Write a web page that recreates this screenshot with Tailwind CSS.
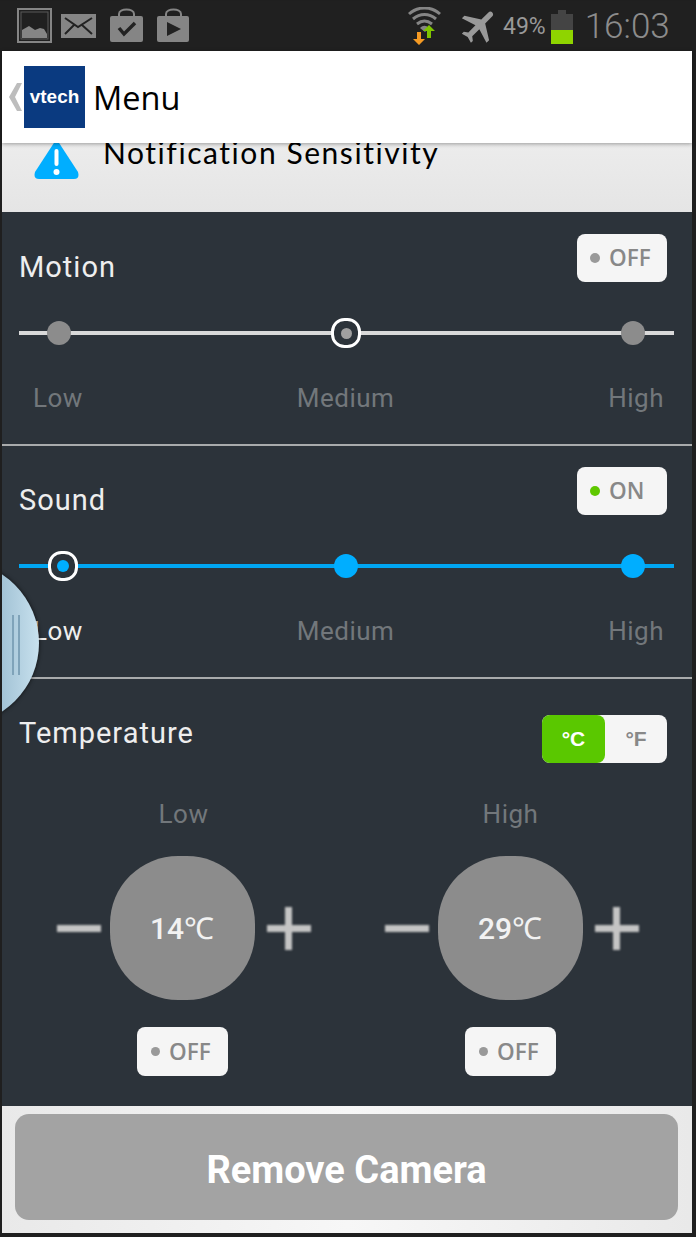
<!DOCTYPE html>
<html lang="en">
<head>
    <meta charset="UTF-8">
    <meta name="viewport" content="width=device-width, initial-scale=1.0">
    <title>Camera Menu</title>
    <script src="https://cdn.jsdelivr.net/npm/@tailwindcss/browser@4"></script>
</head>
<body class="bg-[#1f1f1f]">
<div class="relative w-[696px] h-[1237px] overflow-hidden bg-[#1f1f1f] pt-px font-['Roboto',sans-serif]">
    <!-- Status bar -->
    <div class="flex items-center h-[50px] bg-[#202020]">
        <svg class="ml-[17px] w-[36px] h-[36px]" viewBox="0 0 36 36"><rect x="1" y="1" width="33" height="33" fill="none" stroke="#858585" stroke-width="2"/><rect x="4" y="4" width="27" height="27" fill="none" stroke="#585858" stroke-width="1"/><path d="M5 30V22L12 18L18 22L23 20L27 21L30 26V30Z" fill="#858585"/></svg>
        <svg class="ml-[8px] w-[35px] h-[26px]" viewBox="0 0 35 26"><rect x="0" y="1" width="35" height="24" fill="#858585"/><path d="M4 5L17 14L31 5M4 21L13 12M31 21L21 12" fill="none" stroke="#222" stroke-width="2"/></svg>
        <svg class="ml-[13px] w-[35px] h-[36px]" viewBox="0 0 35 36"><path d="M10 9V6C10 0 25 0 25 6V9" fill="none" stroke="#858585" stroke-width="2"/><rect x="1" y="8" width="33" height="26" rx="2" fill="#858585"/><path d="M10 20L15 26L26 15" fill="none" stroke="#222" stroke-width="3.5"/></svg>
        <svg class="ml-[12px] w-[34px] h-[36px]" viewBox="0 0 34 36"><path d="M10 9V6C10 0 25 0 25 6V9" fill="none" stroke="#858585" stroke-width="2"/><rect x="1" y="8" width="32" height="26" rx="2" fill="#858585"/><path d="M11 14L25 21L11 28Z" fill="#222"/></svg>
        <svg class="ml-[218px] w-[34px] h-[38px]" viewBox="0 0 34 38"><path d="M1 7C10 -1 23 -1 32 7M5 12C12 6 21 6 28 12M9 17C14 13 19 13 24 17" fill="none" stroke="#858585" stroke-width="3"/><path d="M12 21C15 18 18 18 21 21L17 25Z" fill="#858585"/><path d="M9 25H13V32H17L11 38L5 32H9Z" fill="#f59a23"/><path d="M19 31V24H15L21 18L27 24H23V31Z" fill="#7fc400"/></svg>
        <svg class="ml-[16px] w-[44px] h-[44px]" viewBox="0 0 24 24"><path fill="#999" transform="rotate(45 12 12)" d="M21 16v-2l-8-5V3.5c0-.83-.67-1.5-1.5-1.5S10 2.67 10 3.5V9l-8 5v2l8-2.5V19l-2 1.5V22l3.5-1 3.5 1v-1.5L13 19v-5.5l8 2.5z"/></svg>
        <span class="ml-px text-[23px] text-[#999] leading-none">49%</span>
        <div class="ml-[5px] w-[22px] h-[34px] flex flex-col items-center mt-px">
            <div class="w-[8px] h-[4px] bg-[#444]"></div>
            <div class="w-[22px] h-[16px] bg-[#444]"></div>
            <div class="w-[22px] h-[14px] bg-[#8fd400]"></div>
        </div>
        <span class="ml-[12px] text-[35px] font-light text-[#8c8c8c] leading-none">16:03</span>
    </div>

    <div class="ml-[2px] w-[690px]">
        <!-- Header -->
        <div class="relative z-10 flex items-center h-[92px] bg-white shadow-[0_1px_4px_rgba(0,0,0,0.35)]">
            <svg class="ml-[6px] w-[14px] h-[28px]" viewBox="0 0 14 28"><path d="M9 0H14L7 14L14 28H9L1 14Z" fill="#bdbdbd"/></svg>
            <div class="ml-[2px] flex items-center justify-center w-[61px] h-[62px] bg-[#0a3a80] text-white font-['Liberation_Sans',sans-serif] font-bold text-[19px]">vtech</div>
            <span class="ml-[8px] mt-[2px] font-['Open_Sans',sans-serif] text-[32.5px] text-black leading-none">Menu</span>
        </div>

        <!-- Notification band -->
        <div class="relative flex h-[69px] overflow-hidden bg-gradient-to-b from-[#ececec] to-[#e5e5e5]">
            <svg class="ml-[32px] -mt-[4px] w-[45px] h-[40px]" viewBox="0 0 45 40"><path d="M22.5 0L44 33Q46 40 40 40H5Q-1 40 1 33Z" fill="#00aeff"/><rect x="20.5" y="10" width="4" height="17" rx="2" fill="#fff"/><circle cx="22.5" cy="33" r="3" fill="#fff"/></svg>
            <span class="ml-[24px] -mt-[9px] font-['Lato',sans-serif] text-[30px] leading-[36px] text-black tracking-[1.55px]">Notification Sensitivity</span>
        </div>

        <!-- Settings -->
        <div class="bg-[#2c333a]">
            <!-- Motion -->
            <section class="h-[234px] pt-[22px] border-b-2 border-[#a9abac]">
                <div class="flex justify-between pl-[17px] pr-[25px]">
                    <span class="mt-[16px] h-[32px] text-[29px] leading-[34px] tracking-[1px] text-[#eeeeee]">Motion</span>
                    <div class="flex items-center w-[90px] h-[48px] pl-[13px] gap-[9px] rounded-lg bg-[#f5f5f5] font-['Open_Sans',sans-serif] font-semibold text-[22.5px] text-[#888]"><span class="w-[10px] h-[10px] rounded-full bg-[#999]"></span>OFF</div>
                </div>
                <div class="relative flex items-center justify-between h-[30px] mt-[36px] ml-[17px] mr-[18px] pl-[25px] pr-[26px]">
                    <div class="absolute inset-x-0 top-[13px] h-[4px] bg-[#d9d9d9]"></div>
                    <div class="relative flex items-center justify-center w-[30px] h-[30px]"><span class="w-[24px] h-[24px] rounded-full bg-[#8c8c8c]"></span></div>
                    <div class="relative flex items-center justify-center w-[30px] h-[30px] rounded-[45%] border-[3px] border-white bg-[#2c333a]"><span class="w-[11px] h-[11px] rounded-full bg-[#a0a0a0]"></span></div>
                    <div class="relative flex items-center justify-center w-[30px] h-[30px]"><span class="w-[24px] h-[24px] rounded-full bg-[#8c8c8c]"></span></div>
                </div>
                <div class="flex justify-between mt-[35px] pl-[31px] pr-[28px] text-[26px] leading-[30px] tracking-[0.5px] text-[#72777b]"><span>Low</span><span>Medium</span><span>High</span></div>
            </section>

            <!-- Sound -->
            <section class="h-[233px] pt-[21px] border-b-2 border-[#a9abac]">
                <div class="flex justify-between pl-[17px] pr-[25px]">
                    <span class="mt-[16px] h-[32px] text-[29px] leading-[34px] tracking-[1px] text-[#eeeeee]">Sound</span>
                    <div class="flex items-center w-[90px] h-[48px] pl-[13px] gap-[9px] rounded-lg bg-[#f5f5f5] font-['Open_Sans',sans-serif] font-semibold text-[22.5px] text-[#888]"><span class="w-[10px] h-[10px] rounded-full bg-[#5fc800]"></span>ON</div>
                </div>
                <div class="relative flex items-center justify-between h-[30px] mt-[36px] ml-[17px] mr-[18px] pl-[25px] pr-[26px]">
                    <div class="absolute inset-x-0 top-[13px] h-[4px] bg-[#00a6f2]"></div>
                    <div class="relative flex items-center justify-center w-[30px] h-[30px] ml-[4px] -mr-[4px] rounded-[45%] border-[3px] border-white bg-[#2c333a]"><span class="w-[12px] h-[12px] rounded-full bg-[#00aeff]"></span></div>
                    <div class="relative flex items-center justify-center w-[30px] h-[30px]"><span class="w-[24px] h-[24px] rounded-full bg-[#00aeff]"></span></div>
                    <div class="relative flex items-center justify-center w-[30px] h-[30px]"><span class="w-[24px] h-[24px] rounded-full bg-[#00aeff]"></span></div>
                </div>
                <div class="flex justify-between mt-[35px] pl-[31px] pr-[28px] text-[26px] leading-[30px] tracking-[0.5px] text-[#72777b]"><span class="text-[#eeeeee]">Low</span><span>Medium</span><span>High</span></div>
            </section>

            <!-- Temperature -->
            <section class="h-[427px] pt-[36px]">
                <div class="flex justify-between pl-[17px] pr-[25px]">
                    <span class="mt-px text-[29px] leading-[34px] tracking-[1px] text-[#eeeeee]">Temperature</span>
                    <div class="flex w-[125px] h-[48px] rounded-lg bg-[#f5f5f5] font-['Liberation_Sans',sans-serif] font-bold text-[21px] text-[#888]">
                        <div class="flex items-center justify-center w-[63px] rounded-lg bg-[#5ac800] text-white">°C</div>
                        <div class="flex items-center justify-center flex-1">°F</div>
                    </div>
                </div>
                <div class="grid grid-cols-2 w-[654px] ml-[18px] mt-[36px]">
                    <div class="flex flex-col items-center">
                        <span class="text-[26px] leading-[30px] tracking-[0.5px] text-[#72777b]">Low</span>
                        <div class="flex items-center mt-[27px] h-[144px]">
                            <div class="w-[44px] h-[7px] bg-[#c4c4c4] blur-[0.8px]"></div>
                            <div class="flex items-center justify-center ml-[9px] w-[145px] h-[144px] rounded-[47%] bg-[#8c8c8c] text-[30px] font-medium text-[#f2f2f2]">14℃</div>
                            <div class="relative flex items-center justify-center ml-[12px] w-[44px] h-[43px]">
                                <div class="absolute w-[44px] h-[7px] bg-[#c4c4c4] blur-[0.8px]"></div>
                                <div class="absolute w-[7px] h-[43px] bg-[#c4c4c4] blur-[0.8px]"></div>
                            </div>
                        </div>
                        <div class="flex items-center mt-[27px] mr-[2px] w-[91px] h-[49px] pl-[14px] gap-[9px] rounded-lg bg-[#f5f5f5] font-['Open_Sans',sans-serif] font-semibold text-[22.5px] text-[#888]"><span class="w-[9px] h-[9px] rounded-full bg-[#999]"></span>OFF</div>
                    </div>
                    <div class="flex flex-col items-center">
                        <span class="text-[26px] leading-[30px] tracking-[0.5px] text-[#72777b]">High</span>
                        <div class="flex items-center mt-[27px] ml-[2px] h-[144px]">
                            <div class="w-[44px] h-[7px] bg-[#c4c4c4] blur-[0.8px]"></div>
                            <div class="flex items-center justify-center ml-[9px] w-[145px] h-[144px] rounded-[47%] bg-[#8c8c8c] text-[30px] font-medium text-[#f2f2f2]">29℃</div>
                            <div class="relative flex items-center justify-center ml-[12px] w-[44px] h-[43px]">
                                <div class="absolute w-[44px] h-[7px] bg-[#c4c4c4] blur-[0.8px]"></div>
                                <div class="absolute w-[7px] h-[43px] bg-[#c4c4c4] blur-[0.8px]"></div>
                            </div>
                        </div>
                        <div class="flex items-center mt-[27px] w-[91px] h-[49px] pl-[14px] gap-[9px] rounded-lg bg-[#f5f5f5] font-['Open_Sans',sans-serif] font-semibold text-[22.5px] text-[#888]"><span class="w-[9px] h-[9px] rounded-full bg-[#999]"></span>OFF</div>
                    </div>
                </div>
            </section>
        </div>

        <!-- Footer -->
        <div class="h-[127px] pt-[8px] px-[13px] bg-gradient-to-r from-[#e9e9e9] via-[#f7f7f7] to-[#e9e9e9]">
            <button class="flex items-center justify-center w-[663px] h-[106px] pt-[7px] rounded-[14px] bg-[#a3a3a3] text-[38px] font-bold text-white">Remove Camera</button>
        </div>
    </div>

    <!-- Drawer handle over the content -->
    <div class="absolute left-[-125px] top-[561px] w-[164px] h-[164px] rounded-full bg-gradient-to-r from-[#9fc0d3] from-75% to-[#c8e1ee] shadow-[0_0_4px_rgba(0,0,0,0.7)]"></div>
    <div class="absolute left-0 top-[561px] w-[2px] h-[164px] bg-[#1f1f1f]"></div>
    <div class="absolute left-[12px] top-[615px] flex gap-[4px] h-[60px]">
        <div class="w-[2px] bg-[#7fa3b9]"></div>
        <div class="w-[2px] bg-[#7fa3b9]"></div>
    </div>
</div>
</body>
</html>
